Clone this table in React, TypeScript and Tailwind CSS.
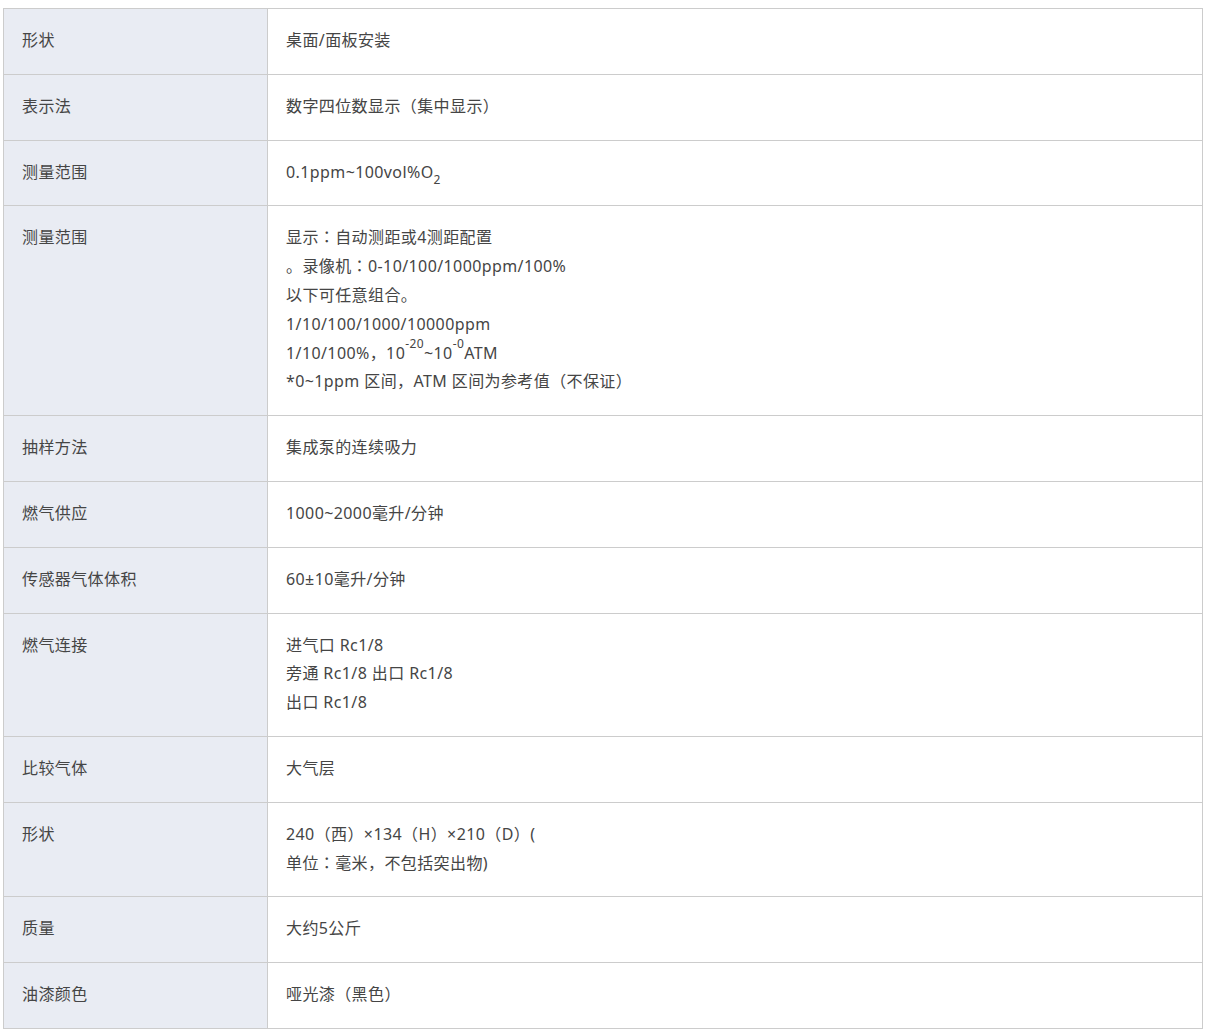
import React from "react";

const rows: { label: string; value: React.ReactNode[] }[] = [
  { label: "形状", value: ["桌面/面板安装"] },
  { label: "表示法", value: ["数字四位数显示（集中显示）"] },
  {
    label: "测量范围",
    value: [
      <>
        0.1ppm~100vol%O<sub className="text-[12px] align-[-3px] leading-none">2</sub>
      </>,
    ],
  },
  {
    label: "测量范围",
    value: [
      "显示：自动测距或4测距配置",
      "。录像机：0-10/100/1000ppm/100%",
      "以下可任意组合。",
      "1/10/100/1000/10000ppm",
      <>
        1/10/100%，10<sup className="text-[12px] align-[5px] leading-none">-20</sup>~10
        <sup className="text-[12px] align-[5px] leading-none">-0</sup>ATM
      </>,
      "*0~1ppm 区间，ATM 区间为参考值（不保证）",
    ],
  },
  { label: "抽样方法", value: ["集成泵的连续吸力"] },
  { label: "燃气供应", value: ["1000~2000毫升/分钟"] },
  { label: "传感器气体体积", value: ["60±10毫升/分钟"] },
  {
    label: "燃气连接",
    value: ["进气口 Rc1/8", "旁通 Rc1/8 出口 Rc1/8", "出口 Rc1/8"],
  },
  { label: "比较气体", value: ["大气层"] },
  {
    label: "形状",
    value: ["240（西）×134（H）×210（D）(", "单位：毫米，不包括突出物)"],
  },
  { label: "质量", value: ["大约5公斤"] },
  { label: "油漆颜色", value: ["哑光漆（黑色）"] },
];

export default function App() {
  return (
    <div
      className="bg-white min-h-[1036px] pt-[8px] pl-[3px]"
      style={{ fontFamily: '"Noto Sans", "Noto Sans CJK JP", sans-serif' }}
    >
      <div className="w-[1200px] border border-[#cccccc] text-[16px] leading-[28.8px] tracking-[0.4px] text-[#454545]">
        {rows.map((r, i) => (
          <div
            key={i}
            className={`flex ${i > 0 ? "border-t border-[#cccccc]" : ""}`}
          >
            <div className="w-[264px] shrink-0 bg-[#e9ecf3] border-r border-[#cccccc] px-[18px] pt-[17px] pb-[19px]">
              <div className="h-[28.8px] whitespace-nowrap">{r.label}</div>
            </div>
            <div className="flex-1 px-[18px] pt-[17px] pb-[19px]">
              {r.value.map((v, j) => (
                <div key={j} className="h-[28.8px] whitespace-nowrap">
                  {v}
                </div>
              ))}
            </div>
          </div>
        ))}
      </div>
    </div>
  );
}
